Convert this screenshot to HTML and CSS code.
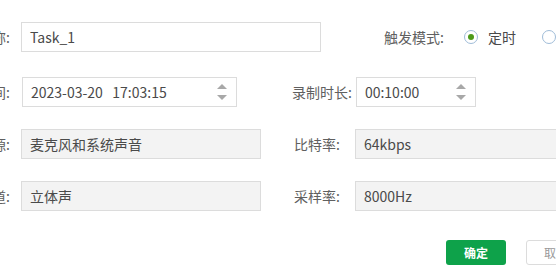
FILE: index.html
```html
<!DOCTYPE html>
<html lang="zh-CN">
<head>
    <meta charset="UTF-8">
    <meta name="viewport" content="width=device-width, initial-scale=1.0">
    <title>录制任务</title>
    <link rel="stylesheet" href="styles.css">
</head>
<body>
    <div class="task-form">
        <div class="row row-name">
            <label class="label">任务名称:</label>
            <div class="field field-name">Task_1</div>
            <label class="label label-right label-trigger">触发模式:</label>
            <div class="radio-group">
                <span class="radio checked"></span>
                <span class="radio-text">定时</span>
                <span class="radio"></span>
                <span class="radio-text">手动</span>
            </div>
        </div>

        <div class="row row-time">
            <label class="label">开始时间:</label>
            <div class="field field-date">
                <span>2023-03-20&nbsp;&nbsp;&nbsp;17:03:15</span>
                <span class="spinner"><i class="up"></i><i class="down"></i></span>
            </div>
            <label class="label label-right label-duration">录制时长:</label>
            <div class="field field-duration">
                <span>00:10:00</span>
                <span class="spinner"><i class="up"></i><i class="down"></i></span>
            </div>
        </div>

        <div class="row row-source">
            <label class="label">音频来源:</label>
            <div class="field field-wide disabled">麦克风和系统声音</div>
            <label class="label label-right label-bitrate">比特率:</label>
            <div class="field field-long disabled">64kbps</div>
        </div>

        <div class="row row-channel">
            <label class="label">音频声道:</label>
            <div class="field field-wide disabled">立体声</div>
            <label class="label label-right label-bitrate">采样率:</label>
            <div class="field field-long disabled">8000Hz</div>
        </div>

        <div class="actions">
            <button class="btn btn-ok">确定</button>
            <button class="btn btn-cancel">取消</button>
        </div>
    </div>
</body>
</html>
```

FILE: styles.css
```css
body {
    margin: 0;
    padding: 0;
    width: 556px;
    height: 278px;
    overflow: hidden;
    background: #fff;
    font-family: "Noto Sans CJK SC", "Noto Sans", sans-serif;
    font-size: 14px;
    color: #4a4a4a;
}

.task-form {
    margin-left: -70px;
    padding-top: 22px;
    width: 800px;
}

.row {
    display: flex;
    align-items: center;
    height: 30px;
}

.row-time {
    margin-top: 25px;
}

.row-source {
    margin-top: 22px;
}

.row-channel {
    margin-top: 22px;
}

.label {
    flex: none;
    width: 80px;
    text-align: right;
    color: #606060;
    white-space: nowrap;
}

.field {
    flex: none;
    box-sizing: border-box;
    height: 30px;
    margin-left: 11px;
    padding: 0 9px 0 8px;
    border: 1px solid #dcdcdc;
    background: #fff;
    display: flex;
    align-items: center;
    justify-content: space-between;
    color: #4a4a4a;
    white-space: nowrap;
}

.field.disabled {
    background: #f3f3f3;
}

.field-name {
    width: 300px;
}

.field-date {
    width: 215px;
    margin-left: 12px;
}

.field-duration {
    width: 120px;
    margin-left: 4px;
}

.field-wide {
    width: 240px;
}

.field-long {
    width: 260px;
    margin-left: 15px;
}

.label-right {
    width: auto;
}

.label-trigger {
    margin-left: 63px;
}

.label-duration {
    margin-left: 55px;
}

.label-bitrate {
    margin-left: 33px;
    width: 46px;
}

.spinner {
    display: flex;
    flex-direction: column;
    gap: 6px;
    margin-right: 0;
}

.spinner i {
    display: block;
    width: 0;
    height: 0;
    border-left: 5px solid transparent;
    border-right: 5px solid transparent;
}

.spinner .up {
    border-bottom: 5px solid #a8a8a8;
}

.spinner .down {
    border-top: 5px solid #a8a8a8;
}

.radio-group {
    display: flex;
    align-items: center;
    margin-left: 20px;
}

.radio {
    box-sizing: border-box;
    width: 14px;
    height: 14px;
    border: 1px solid #9fbcd8;
    border-radius: 50%;
    display: flex;
    align-items: center;
    justify-content: center;
}

.radio.checked::after {
    content: "";
    width: 6px;
    height: 6px;
    border-radius: 50%;
    background: #4d9a1a;
}

.radio-text {
    margin-left: 10px;
    margin-right: 26px;
    color: #4a4a4a;
}

.actions {
    display: flex;
    margin-top: 29px;
    margin-left: 516px;
    gap: 20px;
}

.btn {
    width: 60px;
    height: 25px;
    border-radius: 3px;
    font-family: "Noto Sans CJK SC", sans-serif;
    font-size: 12px;
    cursor: pointer;
    padding: 0;
}

.btn-ok {
    background: #0ea24a;
    color: #fff;
    border: none;
    font-weight: bold;
}

.btn-cancel {
    background: #fff;
    color: #999;
    border: 1px solid #dcdcdc;
}
```
